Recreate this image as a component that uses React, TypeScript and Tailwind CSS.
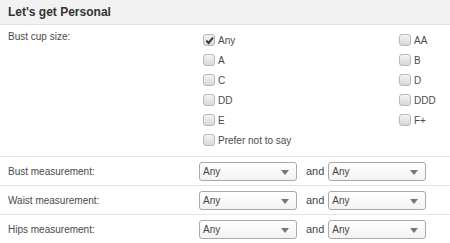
import { useState } from "react"

const cupSizes = [
  ["Any", "AA"],
  ["A", "B"],
  ["C", "D"],
  ["DD", "DDD"],
  ["E", "F+"],
  ["Prefer not to say", null],
]

const measurements = ["Bust measurement:", "Waist measurement:", "Hips measurement:"]

function Box({ label, checked }: { label: string; checked?: boolean }) {
  const [on, setOn] = useState(!!checked)
  return (
    <label className="flex h-[20px] items-center cursor-pointer" onClick={() => setOn(!on)}>
      <span className="ml-[4px] mr-[3px] flex h-[12px] w-[12px] items-center justify-center rounded-[3px] border border-[#b8b8b8] bg-gradient-to-b from-[#f4f4f4] to-[#d8d8d8]">
        {on && (
          <svg width="9" height="9" viewBox="0 0 10 10">
            <path d="M1.5 5.2 L4 7.8 L8.8 1.8" fill="none" stroke="#333" strokeWidth="2.2" />
          </svg>
        )}
      </span>
      <span className="text-[10px] text-[#4a4a4a]">{label}</span>
    </label>
  )
}

function Select() {
  return (
    <div className="relative flex h-[19px] w-[98px] items-center rounded-[3px] border border-[#a9a9a9] bg-gradient-to-b from-white to-[#f3f3f3] pl-[3px] text-[10px] text-[#444]">
      Any
      <svg className="absolute right-[7px] top-[7px]" width="8" height="5" viewBox="0 0 8 5">
        <path d="M0 0 H8 L4 5 Z" fill="#777" />
      </svg>
    </div>
  )
}

export default function App() {
  return (
    <div className="h-[243px] w-[450px] overflow-hidden bg-white" style={{ fontFamily: '"Liberation Sans", Arial, sans-serif' }}>
      <div className="flex h-[25px] items-center border-b border-[#e2e2e2] bg-[#f2f2f2] px-2 text-[12px] font-bold text-[#333]">
        Let's get Personal
      </div>

      <div className="flex pb-[6px] pt-[5px]">
        <div className="w-[199px] pl-2 text-[10px] leading-[14px] text-[#4a4a4a]">Bust cup size:</div>
        <div className="grid grid-cols-[196px_1fr]">
          {cupSizes.map((row) =>
            row.map((c, i) =>
              c ? <Box key={c} label={c} checked={c === "Any"} /> : <div key={"e" + i} />
            )
          )}
        </div>
      </div>

      {measurements.map((m) => (
        <div key={m} className="flex h-[29px] items-center border-t border-[#e5e5e5]">
          <div className="w-[199px] pl-2 text-[10px] text-[#4a4a4a]">{m}</div>
          <Select />
          <span className="ml-[9px] mr-[4px] text-[11px] text-[#444]">and</span>
          <Select />
        </div>
      ))}
    </div>
  )
}
